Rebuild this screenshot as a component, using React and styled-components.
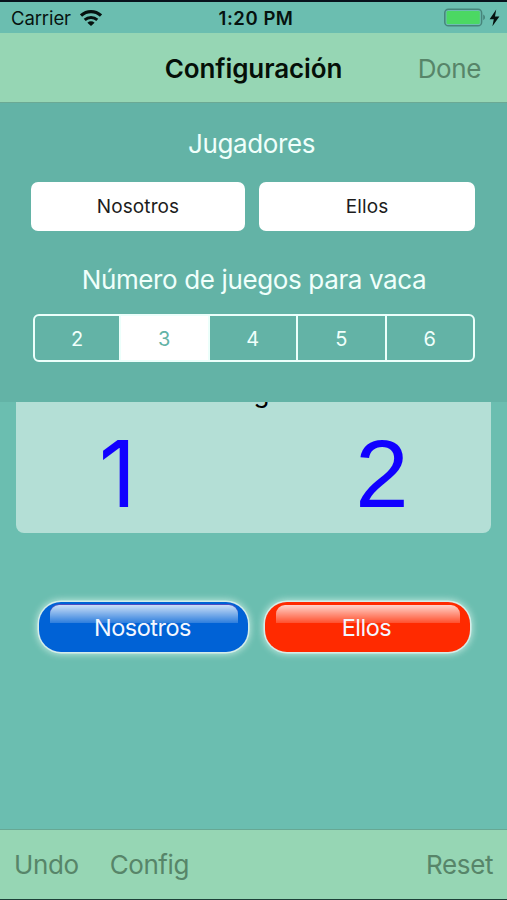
import { useState } from "react"
import styled, { createGlobalStyle } from "styled-components"

const GlobalStyle = createGlobalStyle`
    * {
        box-sizing: border-box;
    }
    body {
        margin: 0;
        background: #6bbeb0;
        font-family: Inter, "Liberation Sans", sans-serif;
    }
    button {
        font-family: inherit;
        cursor: pointer;
    }
`

const games = [2, 3, 4, 5, 6]

const App = () => {

    const [selected, setSelected] = useState(3)

    return (
        <Screen>
            <GlobalStyle />
            <StatusBar>
                <Carrier>
                    <span>Carrier</span>
                    <WifiIcon />
                </Carrier>
                <Time>1:20 PM</Time>
                <Battery>
                    <BatteryIcon />
                </Battery>
            </StatusBar>
            <Board>
                <ScoreCard>
                    <CardTitle>Juegos</CardTitle>
                    <Scores>
                        <Score $font="Inter" $size="92px" $indent="-4px">1</Score>
                        <Score $font='"Liberation Sans"' $size="96px">2</Score>
                    </Scores>
                </ScoreCard>
                <Players>
                    <Glossy $color="#0062d6" $width="209px" $tint="rgba(110, 70, 180, 0.75)">
                        <span>Nosotros</span>
                    </Glossy>
                    <Glossy $color="#ff2a00" $width="205px">
                        <span>Ellos</span>
                    </Glossy>
                </Players>
                <Sheet>
                    <NavBar>
                        <NavTitle>Configuración</NavTitle>
                        <BarButton>Done</BarButton>
                    </NavBar>
                    <Settings>
                        <Label>Jugadores</Label>
                        <Fields>
                            <Field $width="214px">Nosotros</Field>
                            <Field $width="216px">Ellos</Field>
                        </Fields>
                        <Label $indent="2px">Número de juegos para vaca</Label>
                        <Segments>
                            {games.map(n => (
                                <Segment key={n} $active={n === selected} onClick={() => setSelected(n)}>{n}</Segment>
                            ))}
                        </Segments>
                    </Settings>
                </Sheet>
            </Board>
            <Toolbar>
                <BarButton>Undo</BarButton>
                <BarButton>Config</BarButton>
                <Spacer />
                <BarButton>Reset</BarButton>
            </Toolbar>
        </Screen>
    )
}

export default App

const WifiIcon = () => (
    <svg width="22" height="16" viewBox="0 0 22 16" fill="none" stroke="#06120f">
        <path d="M1 5.6C6.8 0.4 15.2 0.4 21 5.6" strokeWidth="3.3" />
        <path d="M4.7 9.8C8.4 6.6 13.6 6.6 17.3 9.8" strokeWidth="3" />
        <path d="M11 16L7.4 12.7C9.5 10.9 12.5 10.9 14.6 12.7Z" fill="#06120f" stroke="none" />
    </svg>
)

const BatteryIcon = () => (
    <svg width="57" height="20" viewBox="0 0 57 20">
        <rect x="0.8" y="1.2" width="36.8" height="16.6" rx="3.6" fill="none" stroke="#47857b" strokeWidth="1.5" />
        <rect x="2.6" y="2.9" width="33.2" height="13.2" rx="1.4" fill="#4bd863" />
        <path d="M39.2 6.6C41.6 7.6 41.6 11.2 39.2 12.2Z" fill="#47857b" />
        <path d="M52.2 1.6L45.6 11.2H49.8L48.4 18.2L55.4 8.4H51Z" fill="#06120f" />
    </svg>
)

const Screen = styled.div`
    width: 507px;
    height: 900px;
    display: flex;
    flex-direction: column;
    overflow: hidden;
    border-top: 2px solid #08121c;
    border-bottom: 1px solid #1d4038;
    background: #6bbeb0;
`

const StatusBar = styled.header`
    height: 31px;
    flex: none;
    display: grid;
    grid-template-columns: 1fr auto 1fr;
    align-items: center;
    padding: 1px 6px 0 11px;
    color: #06120f;
    font-size: 18.5px;
`

const Carrier = styled.div`
    display: flex;
    align-items: center;
    gap: 9px;
    letter-spacing: -0.1px;
`

const Time = styled.div`
    font-weight: 600;
    letter-spacing: 0.55px;
`

const Battery = styled.div`
    display: flex;
    justify-content: flex-end;
`

const Board = styled.main`
    position: relative;
    flex: 1;
    padding: 267px 16px 0;
`

const ScoreCard = styled.section`
    height: 233px;
    width: 475px;
    padding-top: 76px;
    border-radius: 8px;
    background: #b4dfd6;
`

const CardTitle = styled.h2`
    margin: 0;
    font-size: 26px;
    line-height: 34px;
    font-weight: 400;
    text-align: center;
    color: #000;
`

const Scores = styled.div`
    display: grid;
    grid-template-columns: 207px 1fr;
    margin-top: 10px;
    column-gap: 50px;
`

const Score = styled.div`
    height: 108px;
    line-height: 108px;
    font-family: ${props => props.$font}, sans-serif;
    font-size: ${props => props.$size};
    text-align: center;
    text-indent: ${props => props.$indent || 0};
    color: #1100ff;
`

const Players = styled.div`
    display: flex;
    gap: 17px;
    margin: 69px 0 0 23px;
`

const Glossy = styled.button`
    width: ${props => props.$width};
    height: 50px;
    padding: 0 2px 0 0;
    position: relative;
    border: none;
    border-radius: 22px;
    background: ${props => props.$color};
    box-shadow: 0 0 0 1.5px #d5ede9, 0 0 7px 2px rgba(225, 250, 240, 0.75);
    color: #f3f7ff;
    font-size: 23.5px;
    letter-spacing: -0.5px;
    /* shine along the top edge */
    &::before {
        content: "";
        position: absolute;
        top: 3px;
        left: 11px;
        right: 10px;
        height: 18px;
        border-radius: 9px 9px 0 0;
        background: linear-gradient(rgba(255, 255, 255, 0.8), rgba(255, 255, 255, 0.18));
        box-shadow: 0 -1px 0 ${props => props.$tint || "transparent"};
    }
    span {
        position: relative;
    }
`

const Sheet = styled.section`
    position: absolute;
    top: 0;
    left: 0;
    width: 100%;
    height: 369px;
    background: #63b3a6;
`

const NavBar = styled.nav`
    height: 70px;
    display: grid;
    grid-template-columns: 1fr auto 1fr;
    align-items: center;
    padding: 1px 26px 0;
    border-bottom: 1px solid #6ba994;
    background: #96d6b4;
    button {
        grid-column: 3;
        justify-self: end;
    }
`

const NavTitle = styled.h1`
    grid-column: 2;
    margin: 0;
    font-size: 26px;
    font-weight: 600;
    letter-spacing: -0.1px;
    color: #050f08;
`

const BarButton = styled.button`
    padding: 0;
    border: none;
    background: none;
    color: #578569;
    font-size: 26px;
    letter-spacing: -0.4px;
`

const Settings = styled.div`
    padding: 24px 32px 0 31px;
`

const Label = styled.h2`
    margin: 0;
    font-size: 26px;
    line-height: 34px;
    font-weight: 400;
    letter-spacing: -0.37px;
    text-align: center;
    text-indent: ${props => props.$indent || "-3px"};
    color: #f0fffb;
`

const Fields = styled.div`
    display: flex;
    justify-content: space-between;
    margin: 21px 0 32px;
`

const Field = styled.div`
    width: ${props => props.$width};
    height: 49px;
    line-height: 49px;
    border-radius: 7px;
    background: #fff;
    font-size: 19px;
    letter-spacing: 0.1px;
    text-align: center;
    color: #1c1c1c;
`

const Segments = styled.div`
    display: flex;
    height: 48px;
    margin: 17px 0 0 2px;
    border: 2px solid #ecfffb;
    border-radius: 6px;
    overflow: hidden;
`

const Segment = styled.button`
    flex: 1;
    padding: 1px 0 0;
    border: none;
    border-left: 2px solid #ecfffb;
    background: ${props => props.$active ? "#fff" : "transparent"};
    color: ${props => props.$active ? "#63b3a6" : "#f0fffb"};
    font-size: 20px;
    &:first-child {
        flex: 0 0 84px;
        border-left: none;
    }
`

const Toolbar = styled.footer`
    height: 70px;
    flex: none;
    display: flex;
    align-items: center;
    gap: 31px;
    padding: 0 14px;
    border-top: 1px solid #67a894;
    background: #96d6b4;
`

const Spacer = styled.div`
    flex: 1;
`
